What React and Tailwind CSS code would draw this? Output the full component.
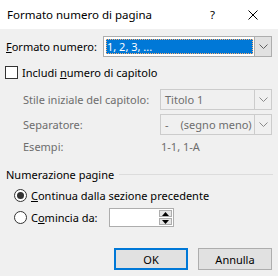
import React from 'react';

const Chevron = ({ color = '#606060' }) => (
  <svg width="9" height="5" viewBox="0 0 9 5">
    <path d="M0.5 0.5 L4.5 4.5 L8.5 0.5" fill="none" stroke={color} strokeWidth="1" />
  </svg>
);

const Combo = ({ width, children, disabled, focused }) => (
  <div
    className={`flex h-[21px] border ${disabled ? 'border-[#cccccc] bg-[#f0f0f0]' : 'border-[#adadad] bg-white'}`}
    style={{ width }}
  >
    <div className="flex-1 flex items-center p-[2px] pr-[1px] min-w-0">
      {focused ? (
        <div className="flex-1 h-full bg-[#0078d7] text-white flex items-center pl-[1px] outline outline-1 outline-dotted outline-[#ffb070] -outline-offset-1">
          {children}
        </div>
      ) : (
        <div className={`pl-[2px] flex items-center ${disabled ? 'text-[#6d6d6d]' : ''}`}>{children}</div>
      )}
    </div>
    <div
      className={`w-[17px] flex items-center justify-center border-l ${disabled ? 'border-[#cccccc] bg-[#f0f0f0]' : 'border-[#adadad] bg-[#e1e1e1]'}`}
    >
      <Chevron color={disabled ? '#8a8a8a' : '#606060'} />
    </div>
  </div>
);

const Radio = ({ checked }) => (
  <div className="w-[13px] h-[13px] rounded-full border border-[#333333] bg-white flex items-center justify-center shrink-0">
    {checked && <div className="w-[7px] h-[7px] rounded-full bg-[#333333]" />}
  </div>
);

export default function App() {
  return (
    <div
      className="w-[278px] h-[276px] bg-[#f0f0f0] text-[11px] text-black leading-none overflow-hidden whitespace-nowrap"
      style={{ fontFamily: '"Noto Sans", sans-serif' }}
    >
      <div className="h-[29px] bg-white flex items-center">
        <div className="pl-[7px] flex-1 text-[11.5px]">Formato numero di pagina</div>
        <div className="mr-[33px] text-[11.5px]">?</div>
        <svg width="10" height="10" viewBox="0 0 10 10" className="mr-[20px]">
          <path d="M0.5 0.5 L9.5 9.5 M9.5 0.5 L0.5 9.5" stroke="#000" strokeWidth="1" />
        </svg>
      </div>

      <div className="flex items-center h-[21px] mt-[7px] pl-[6px]">
        <div className="w-[97px]">
          <span className="underline">F</span>ormato numero:
        </div>
        <Combo width={169} focused>1, 2, 3, ...</Combo>
      </div>

      <div className="flex items-center h-[13px] mt-[9px] pl-[5px] gap-[4px]">
        <div className="w-[13px] h-[13px] border border-[#333333] bg-white" />
        <div>
          Includi <span className="underline">n</span>umero di capitolo
        </div>
      </div>

      <div className="pl-[23px] text-[#6d6d6d]">
        <div className="flex items-center h-[21px] mt-[10px]">
          <div className="w-[137px]">Stile iniziale del capitolo:</div>
          <Combo width={112} disabled>Titolo 1</Combo>
        </div>
        <div className="flex items-center h-[21px] mt-[4px]">
          <div className="w-[137px]">Separatore:</div>
          <Combo width={112} disabled>
            <span>-</span>
            <span className="ml-[12px]">(segno meno)</span>
          </Combo>
        </div>
        <div className="flex items-center h-[13px] mt-[5px]">
          <div className="w-[138px]">Esempi:</div>
          <div>1-1, 1-A</div>
        </div>
      </div>

      <div className="flex items-center h-[13px] mt-[15px] pl-[6px] pr-[5px] gap-[5px]">
        <div>Numerazione pagine</div>
        <div className="flex-1 border-t border-[#dcdcdc]" />
      </div>

      <div className="pl-[14px]">
        <div className="flex items-center h-[13px] mt-[8px] gap-[4px]">
          <Radio checked />
          <div>
            <span className="underline">C</span>ontinua dalla sezione precedente
          </div>
        </div>
        <div className="flex items-center h-[19px] mt-[6px] gap-[4px]">
          <Radio />
          <div className="w-[74px]">
            C<span className="underline">o</span>mincia da:
          </div>
          <div className="flex w-[65px] h-[19px] border border-[#adadad] bg-white">
            <div className="flex-1" />
            <div className="w-[15px] flex flex-col p-[1px] gap-[1px]">
              <div className="flex-1 bg-[#e5e5e5] border border-[#adadad] flex items-center justify-center">
                <svg width="7" height="4" viewBox="0 0 7 4"><path d="M3.5 0 L7 4 L0 4 Z" fill="#000" /></svg>
              </div>
              <div className="flex-1 bg-[#e5e5e5] border border-[#adadad] flex items-center justify-center">
                <svg width="7" height="4" viewBox="0 0 7 4"><path d="M0 0 L7 0 L3.5 4 Z" fill="#000" /></svg>
              </div>
            </div>
          </div>
        </div>
      </div>

      <div className="flex justify-end gap-[10px] mt-[21px] pr-[6px]">
        <div className="w-[74px] h-[22px] border-2 border-[#0078d7] bg-[#e1e1e1] flex items-center justify-center">OK</div>
        <div className="w-[74px] h-[22px] border border-[#adadad] bg-[#e1e1e1] flex items-center justify-center">Annulla</div>
      </div>
    </div>
  );
}
